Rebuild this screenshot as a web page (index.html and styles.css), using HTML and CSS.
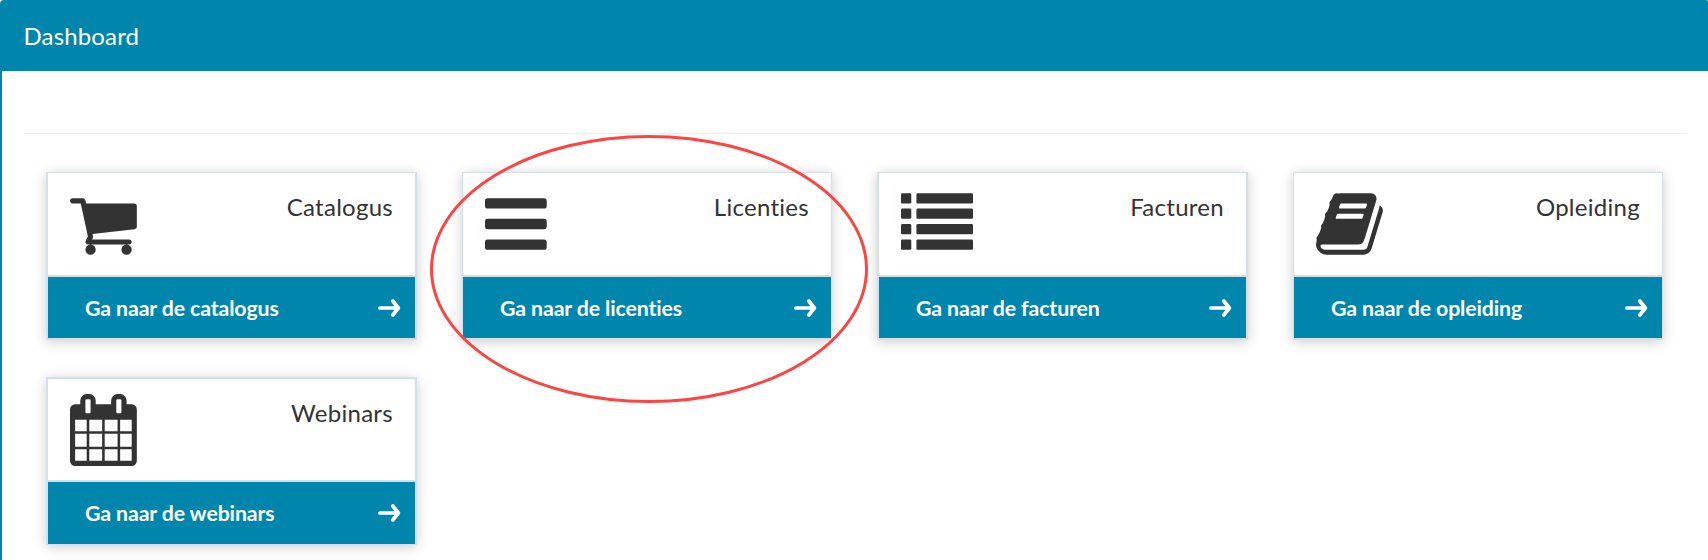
FILE: index.html
```html
<!DOCTYPE html>
<html lang="nl">
<head>
<meta charset="utf-8">
<title>Dashboard</title>
<link rel="stylesheet" href="styles.css">
</head>
<body>
<svg class="defs" aria-hidden="true">
  <symbol id="arrow" viewBox="0 0 24 20"><path d="M2.9 10H21M15.8 3L21.4 10L15.8 17" fill="none" stroke="#fff" stroke-width="3.7" stroke-linecap="round" stroke-linejoin="round"/></symbol>
</svg>
<section class="panel">
  <header class="panel-heading">Dashboard</header>
  <div class="panel-body">
    <hr class="rule">
    <main class="tiles">
      <article class="tile wide">
        <div class="tile-top">
          <svg class="icon" viewBox="64 0 1664 1792"><path d="M704 1536q0 52-38 90t-90 38-90-38-38-90 38-90 90-38 90 38 38 90zm896 0q0 52-38 90t-90 38-90-38-38-90 38-90 90-38 90 38 38 90zm128-1088v512q0 24-16.5 42.5t-40.5 21.5l-1044 122q13 60 13 70 0 16-24 64h920q26 0 45 19t19 45-19 45-45 19h-1024q-26 0-45-19t-19-45q0-11 8-31.5t16-36 21.5-40 15.5-29.5l-177-823h-204q-26 0-45-19t-19-45 19-45 45-19h256q16 0 28.5 6.5t19.5 15.5 13 24.5 8 26 5.5 29.5 4.5 26h1201q26 0 45 19t19 45z"/></svg>
          <span class="title">Catalogus</span>
        </div>
        <a class="tile-link"><span>Ga naar de catalogus</span><svg class="arrow"><use href="#arrow"/></svg></a>
      </article>
      <article class="tile">
        <div class="tile-top">
          <svg class="icon" viewBox="128 0 1536 1792"><rect x="128" y="256" width="1536" height="256" rx="64"/><rect x="128" y="768" width="1536" height="256" rx="64"/><rect x="128" y="1280" width="1536" height="256" rx="64"/></svg>
          <span class="title">Licenties</span>
        </div>
        <a class="tile-link"><span>Ga naar de licenties</span><svg class="arrow"><use href="#arrow"/></svg></a>
        <svg class="highlight" viewBox="0 0 438 268"><ellipse cx="219" cy="134" rx="217.5" ry="132.5"/></svg>
      </article>
      <article class="tile wide">
        <div class="tile-top">
          <svg class="icon" viewBox="0 0 1792 1792"><rect y="128" width="256" height="256" rx="32"/><rect y="512" width="256" height="256" rx="32"/><rect y="896" width="256" height="256" rx="32"/><rect y="1280" width="256" height="256" rx="32"/><rect x="384" y="128" width="1408" height="256" rx="32"/><rect x="384" y="512" width="1408" height="256" rx="32"/><rect x="384" y="896" width="1408" height="256" rx="32"/><rect x="384" y="1280" width="1408" height="256" rx="32"/></svg>
          <span class="title">Facturen</span>
        </div>
        <a class="tile-link"><span>Ga naar de facturen</span><svg class="arrow"><use href="#arrow"/></svg></a>
      </article>
      <article class="tile">
        <div class="tile-top">
          <svg class="icon" viewBox="64 0 1664 1792"><path d="M1703 478q40 57 18 129l-275 906q-19 64-76.5 107.5t-122.5 43.5h-923q-77 0-148.5-53.5t-99.5-131.5q-24-67-2-127 0-4 3-27t4-37q1-8-3-21.5t-3-19.5q2-11 8-21t16.5-23.5 16.5-23.5q23-38 45-91.5t30-91.5q3-10 .5-30t-.5-28q3-11 17-28t17-23q21-36 42-92t25-90q1-9-2.5-32t.5-28q4-13 22-30.5t22-22.5q19-26 42.5-84.5t27.5-96.5q1-8-3-25.5t-2-26.5q2-8 9-18t18-23 17-21q8-12 16.5-30.5t15-35 16-36 19.5-32 26.5-23.5 36-11.5 47.5 5.5l-1 3q38-9 51-9h761q74 0 114 56t18 130l-274 906q-36 119-71.5 153.5t-128.5 34.5h-869q-27 0-38 15-11 16-1 43 24 70 144 70h923q29 0 56-15.5t35-41.5l300-987q7-22 5-57 38 15 59 43zm-1064 2q-4 13 2 22.5t20 9.5h608q13 0 25.5-9.5t16.5-22.5l21-64q4-13-2-22.5t-20-9.5h-608q-13 0-25.5 9.5t-16.5 22.5zm-83 256q-4 13 2 22.5t20 9.5h608q13 0 25.5-9.5t16.5-22.5l21-64q4-13-2-22.5t-20-9.5h-608q-13 0-25.5 9.5t-16.5 22.5z"/></svg>
          <span class="title">Opleiding</span>
        </div>
        <a class="tile-link"><span>Ga naar de opleiding</span><svg class="arrow"><use href="#arrow"/></svg></a>
      </article>
      <article class="tile wide second">
        <div class="tile-top">
          <svg class="icon" viewBox="64 0 1664 1792"><path d="M192 1664h288v-288h-288v288zm352 0h320v-288h-320v288zm-352-352h288v-320h-288v320zm352 0h320v-320h-320v320zm-352-384h288v-288h-288v288zm736 736h320v-288h-320v288zm-384-736h320v-288h-320v288zm768 736h288v-288h-288v288zm-384-352h320v-320h-320v320zm-352-864v-288q0-13-9.5-22.5t-22.5-9.5h-64q-13 0-22.5 9.5t-9.5 22.5v288q0 13 9.5 22.5t22.5 9.5h64q13 0 22.5-9.5t9.5-22.5zm736 864h288v-320h-288v320zm-384-384h320v-288h-320v288zm384 0h288v-288h-288v288zm32-480v-288q0-13-9.5-22.5t-22.5-9.5h-64q-13 0-22.5 9.5t-9.5 22.5v288q0 13 9.5 22.5t22.5 9.5h64q13 0 22.5-9.5t9.5-22.5zm384-64v1280q0 52-38 90t-90 38h-1408q-52 0-90-38t-38-90v-1280q0-52 38-90t90-38h128v-96q0-66 47-113t113-47h64q66 0 113 47t47 113v96h384v-96q0-66 47-113t113-47h64q66 0 113 47t47 113v96h128q52 0 90 38t38 90z"/></svg>
          <span class="title">Webinars</span>
        </div>
        <a class="tile-link"><span>Ga naar de webinars</span><svg class="arrow"><use href="#arrow"/></svg></a>
      </article>
    </main>
  </div>
</section>
</body>
</html>
```
FILE: styles.css
```css
* { box-sizing: border-box; }
html {
  height: 560px;
  overflow: hidden;
}
body {
  margin: 0;
  height: 560px;
  overflow: hidden;
  background: #fff;
  color: #333;
  font-family: Lato, sans-serif;
  font-variant-ligatures: none;
}
.defs { display: none; }
.panel-heading {
  height: 71px;
  padding-left: 23.5px;
  background: #0086ad;
  border-radius: 4px 2px 0 0;
  color: #fff;
  font-size: 24px;
  line-height: 71px;
  letter-spacing: .15px;
}
.panel-body {
  height: 489px;
  padding: 62px 22px 0;
  border-left: 2px solid #0086ad;
}
.rule {
  height: 1px;
  margin: 0;
  border: 0;
  background: #eee;
}
.tiles {
  display: grid;
  grid-template-columns: 371px 370px 371px 370px;
  gap: 37px 45px;
  padding: 38px 0 0 22px;
}
.tile {
  position: relative;
  height: 168px;
  border: solid #d3e0eb;
  border-width: 1px 1px 2px;
  box-shadow: 0 2px 12px rgba(0, 0, 0, .2);
}
.wide { border-width: 1px 2px 2px; }
.second { border-width: 2px 2px 1px; }
.tile-top {
  display: flex;
  justify-content: space-between;
  height: 104px;
  padding: 15px 22px 0;
  border-bottom: 2px solid #d3e0eb;
  background: #fff;
}
.second .tile-top { height: 103px; }
.icon {
  height: 72px;
  fill: #333;
}
.title {
  padding-top: 4px;
  font-size: 24px;
  line-height: 29px;
  letter-spacing: .28px;
}
.tile-link {
  display: flex;
  justify-content: space-between;
  align-items: center;
  height: 61px;
  padding: 0 14px 0 37px;
  background: #0086ad;
  color: #fff;
  font-size: 21.3px;
  font-weight: 700;
  letter-spacing: -.12px;
}
.second .tile-link { height: 62px; }
.arrow {
  width: 24px;
  height: 20px;
}
.highlight {
  position: absolute;
  left: -33px;
  top: -38px;
  z-index: 1;
  width: 438px;
  height: 268px;
  fill: none;
  stroke: #ff4343;
  stroke-width: 3;
}
```
